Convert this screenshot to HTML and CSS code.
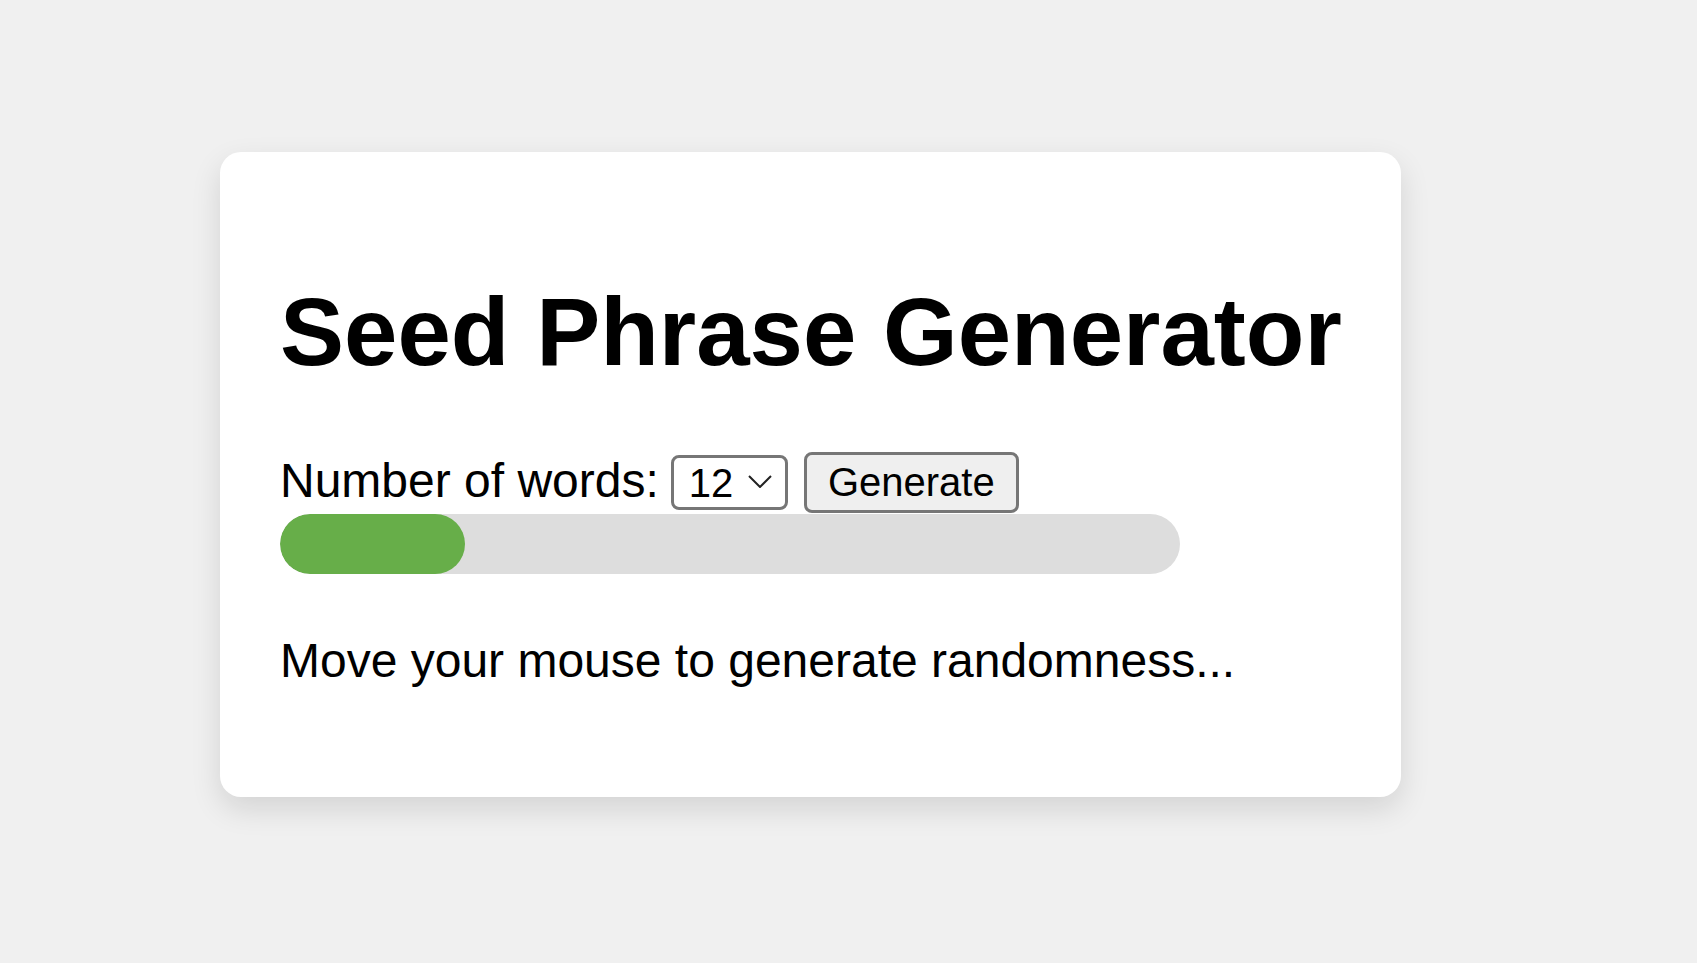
FILE: index.html
```html
<!DOCTYPE html>
<html lang="en">
<head>
<meta charset="utf-8">
<title>Seed Phrase Generator</title>
<link rel="stylesheet" href="styles.css">
</head>
<body>
<div class="card">
  <h1 class="title">Seed Phrase Generator</h1>
  <div class="controls">
    <label class="label" for="count">Number of words:</label>
    <span class="select-wrap">
      <select id="count" class="select">
        <option>12</option>
        <option>24</option>
      </select>
      <svg class="chevron" width="24" height="13" viewBox="0 0 24 13" aria-hidden="true"><polyline points="1,1 12,12 23,1" fill="none" stroke="#222" stroke-width="2"/></svg>
    </span>
    <button class="btn" type="button">Generate</button>
  </div>
  <div class="bar"><div class="fill" style="width: 20.5%"></div></div>
  <p class="hint">Move your mouse to generate randomness...</p>
</div>
</body>
</html>
```

FILE: styles.css
```css
html {
  background: #f0f0f0;
}
body {
  margin: 0;
  padding: 152px 0 60px 220px;
  font-family: "Liberation Sans", Arial, sans-serif;
  color: #000;
}
.card {
  box-sizing: border-box;
  width: 1181px;
  padding: 60px 60px 60px 60px;
  background: #fff;
  border-radius: 21px;
  box-shadow: 0 12px 30px rgba(0, 0, 0, 0.12);
}
.title {
  margin: 65px 0 65px 0;
  font-size: 96px;
  font-weight: bold;
  line-height: normal;
  white-space: nowrap;
}
.controls {
  display: flex;
  align-items: center;
  height: 61px;
}
.label {
  font-size: 48px;
  margin-right: 12px;
  padding-bottom: 4px;
}
.select-wrap {
  position: relative;
  display: inline-block;
  margin-right: 16px;
}
.select {
  -webkit-appearance: none;
  appearance: none;
  box-sizing: border-box;
  width: 117px;
  height: 55px;
  padding: 0 0 0 15px;
  border: 3px solid #767676;
  border-radius: 8px;
  background: #fff;
  font-family: "Liberation Sans", Arial, sans-serif;
  font-size: 40px;
  color: #000;
  display: block;
}
.chevron {
  position: absolute;
  left: 77px;
  top: 20px;
  pointer-events: none;
}
.btn {
  box-sizing: border-box;
  height: 61px;
  width: 215px;
  padding: 0 20px;
  border: 3px solid #767676;
  border-radius: 8px;
  background: #efefef;
  font-family: "Liberation Sans", Arial, sans-serif;
  font-size: 40px;
  color: #000;
}
.bar {
  width: 900px;
  height: 60px;
  margin-top: 1px;
  background: #dddddd;
  border-radius: 30px;
  overflow: hidden;
}
.fill {
  height: 100%;
  background: #67ae49;
  border-radius: 30px;
}
.hint {
  margin: 59px 0 49px 0;
  font-size: 48px;
  line-height: normal;
}
```
